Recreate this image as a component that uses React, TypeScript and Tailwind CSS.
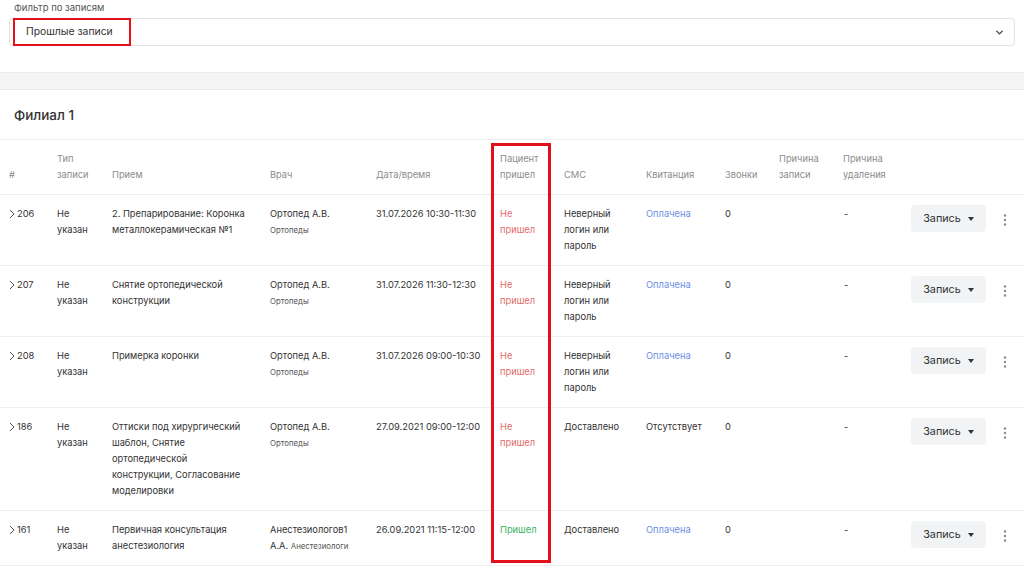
import { ChevronDown } from 'lucide-react';

type Row = {
  id: number;
  service: string;
  doctor: string;
  spec: string;
  date: string;
  came: boolean;
  sms: string;
  receipt: string;
};

const rows: Row[] = [
  {
    id: 206,
    service: '2. Препарирование: Коронка металлокерамическая №1',
    doctor: 'Ортопед А.В.',
    spec: 'Ортопеды',
    date: '31.07.2026 10:30-11:30',
    came: false,
    sms: 'Неверный логин или пароль',
    receipt: 'Оплачена',
  },
  {
    id: 207,
    service: 'Снятие ортопедической конструкции',
    doctor: 'Ортопед А.В.',
    spec: 'Ортопеды',
    date: '31.07.2026 11:30-12:30',
    came: false,
    sms: 'Неверный логин или пароль',
    receipt: 'Оплачена',
  },
  {
    id: 208,
    service: 'Примерка коронки',
    doctor: 'Ортопед А.В.',
    spec: 'Ортопеды',
    date: '31.07.2026 09:00-10:30',
    came: false,
    sms: 'Неверный логин или пароль',
    receipt: 'Оплачена',
  },
  {
    id: 186,
    service: 'Оттиски под хирургический шаблон, Снятие ортопедической конструкции, Согласование моделировки',
    doctor: 'Ортопед А.В.',
    spec: 'Ортопеды',
    date: '27.09.2021 09:00-12:00',
    came: false,
    sms: 'Доставлено',
    receipt: 'Отсутствует',
  },
  {
    id: 161,
    service: 'Первичная консультация анестезиология',
    doctor: 'Анестезиологов1 А.А.',
    spec: 'Анестезиологи',
    date: '26.09.2021 11:15-12:00',
    came: true,
    sms: 'Доставлено',
    receipt: 'Оплачена',
  },
];

const headers = [
  '#',
  'Тип записи',
  'Прием',
  'Врач',
  'Дата/время',
  'Пациент пришел',
  'СМС',
  'Квитанция',
  'Звонки',
  'Причина записи',
  'Причина удаления',
  '',
  '',
];

const widths = [57, 55, 158, 106, 124, 64, 82, 79, 54, 64, 68, 84, 29];

function Kebab() {
  return (
    <svg width="4" height="14" viewBox="0 0 4 14" className="text-[#8a8a8a]">
      <circle cx="2" cy="2.5" r="1.2" fill="currentColor" />
      <circle cx="2" cy="7" r="1.2" fill="currentColor" />
      <circle cx="2" cy="11.5" r="1.2" fill="currentColor" />
    </svg>
  );
}

export default function App() {
  return (
    <div className="h-[568px] w-full overflow-hidden bg-white font-['Inter',sans-serif] text-[#333]">
      {/* Filter */}
      <div className="px-[9px] pt-px">
        <div className="pl-[5px] text-[9.5px] leading-[14px] text-[#555]">Фильтр по записям</div>
        <div className="relative mt-[3px] flex h-[28px] items-center justify-between rounded-[4px] border border-[#e2e2e2] bg-white pl-[16px] pr-[9px]">
          <span className="text-[10.4px] text-[#333]">Прошлые записи</span>
          <ChevronDown size={11} strokeWidth={3} className="text-[#444]" />
          <div className="absolute left-[3px] top-[-1px] h-[28px] w-[118px] border-2 border-[#e3101a]" />
        </div>
      </div>

      <div className="mt-[26px] h-[18px] border-y border-[#ebebeb] bg-[#f5f5f5]" />

      {/* Card */}
      <div className="px-[14px] pb-[14px] pt-[15px] text-[13.5px] font-medium leading-[20px] text-[#333]">Филиал 1</div>

      <div className="relative">
        <table className="w-full table-fixed border-collapse text-[9.3px] leading-[16px]">
          <colgroup>
            {widths.map((w, i) => (
              <col key={i} style={{ width: w }} />
            ))}
          </colgroup>
          <thead>
            <tr className="border-y border-[#ececec]">
              {headers.map((h, i) => (
                <th
                  key={i}
                  className={`py-[11px] pr-[10px] text-left align-bottom font-normal text-[#8c8c8c] ${i === 0 ? 'pl-[9px]' : ''}`}
                >
                  {h}
                </th>
              ))}
            </tr>
          </thead>
          <tbody>
            {rows.map(r => (
              <tr key={r.id} className="border-b border-[#efefef] align-top">
                <td className="py-[11px] pl-[9px]">
                  <div className="flex items-center gap-[2px]">
                    <svg width="6" height="10" viewBox="0 0 6 10" className="shrink-0">
                      <path d="M1 1l4 4-4 4" fill="none" stroke="#555" strokeWidth="1" />
                    </svg>
                    <span>{r.id}</span>
                  </div>
                </td>
                <td className="py-[11px] pr-[14px]">Не указан</td>
                <td className="py-[11px] pr-[20px]">{r.service}</td>
                <td className="py-[11px] pr-[16px]">
                  {r.doctor} <span className="text-[7.8px] text-[#555]">{r.spec}</span>
                </td>
                <td className="py-[11px] pr-[10px]">{r.date}</td>
                <td className={`py-[11px] pr-[20px] ${r.came ? 'text-[#37b45e]' : 'text-[#e36b6b]'}`}>
                  {r.came ? 'Пришел' : 'Не пришел'}
                </td>
                <td className="py-[11px] pr-[12px]">{r.sms}</td>
                <td className={`py-[11px] pr-[8px] ${r.receipt === 'Оплачена' ? 'text-[#6c8fe4]' : ''}`}>{r.receipt}</td>
                <td className="py-[11px] pr-[10px]">0</td>
                <td className="py-[11px] pr-[10px]" />
                <td className="py-[11px] pr-[10px] pl-px">-</td>
                <td className="py-[11px]">
                  <button className="-mt-px flex h-[27px] w-[75px] items-center justify-center gap-[7px] rounded-[4px] bg-[#f1f3f5] text-[10.8px] text-[#333]">
                    <span>Запись</span>
                    <svg width="6" height="4" viewBox="0 0 6 4">
                      <path d="M0 0h6L3 4z" fill="#333" />
                    </svg>
                  </button>
                </td>
                <td className="py-[11px] pl-[8px]">
                  <div className="pt-[7px]">
                    <Kebab />
                  </div>
                </td>
              </tr>
            ))}
          </tbody>
        </table>
        <div className="absolute left-[491px] top-[4px] h-[420px] w-[60px] border-[3px] border-[#e3101a]" />
      </div>
    </div>
  );
}
